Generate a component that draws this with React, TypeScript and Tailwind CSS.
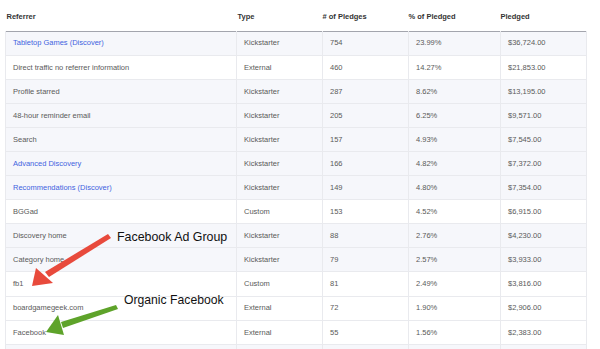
const rows: { ref: string; link?: boolean; type: string; n: string; pct: string; amt: string; shade: boolean }[] = [
  { ref: 'Tabletop Games (Discover)', link: true, type: 'Kickstarter', n: '754', pct: '23.99%', amt: '$36,724.00', shade: true },
  { ref: 'Direct traffic no referrer information', type: 'External', n: '460', pct: '14.27%', amt: '$21,853.00', shade: false },
  { ref: 'Profile starred', type: 'Kickstarter', n: '287', pct: '8.62%', amt: '$13,195.00', shade: true },
  { ref: '48-hour reminder email', type: 'Kickstarter', n: '205', pct: '6.25%', amt: '$9,571.00', shade: true },
  { ref: 'Search', type: 'Kickstarter', n: '157', pct: '4.93%', amt: '$7,545.00', shade: true },
  { ref: 'Advanced Discovery', link: true, type: 'Kickstarter', n: '166', pct: '4.82%', amt: '$7,372.00', shade: true },
  { ref: 'Recommendations (Discover)', link: true, type: 'Kickstarter', n: '149', pct: '4.80%', amt: '$7,354.00', shade: true },
  { ref: 'BGGad', type: 'Custom', n: '153', pct: '4.52%', amt: '$6,915.00', shade: false },
  { ref: 'Discovery home', type: 'Kickstarter', n: '88', pct: '2.76%', amt: '$4,230.00', shade: true },
  { ref: 'Category home', type: 'Kickstarter', n: '79', pct: '2.57%', amt: '$3,933.00', shade: true },
  { ref: 'fb1', type: 'Custom', n: '81', pct: '2.49%', amt: '$3,816.00', shade: false },
  { ref: 'boardgamegeek.com', type: 'External', n: '72', pct: '1.90%', amt: '$2,906.00', shade: false },
  { ref: 'Facebook', type: 'External', n: '55', pct: '1.56%', amt: '$2,383.00', shade: false },
  { ref: '', type: '', n: '', pct: '', amt: '', shade: true },
];

export default function App() {
  return (
    <div className="relative h-[349px] w-[600px] overflow-hidden bg-white font-['Liberation_Sans',Arial,sans-serif] text-[7.5px]">
      <table className="ml-[5px] w-[581px] table-fixed border-collapse">
        <colgroup>
          <col className="w-[231px]" />
          <col className="w-[86px]" />
          <col className="w-[86px]" />
          <col className="w-[92px]" />
          <col className="w-[86px]" />
        </colgroup>
        <thead>
          <tr className="h-[31px] border-b border-[#a3a5ad] text-left font-bold text-[#333]">
            <th className="pl-px pt-[2px]">Referrer</th>
            <th className="pl-px pt-[2px]">Type</th>
            <th className="pl-0 pt-[2px]"># of Pledges</th>
            <th className="pl-0 pt-[2px]">% of Pledged</th>
            <th className="pl-0 pt-[2px]">Pledged</th>
          </tr>
        </thead>
        <tbody>
          {rows.map((r, i) => (
            <tr key={i} className={`h-[24.1px] border-b border-[#e9eaee] text-[#5a5a5a] ${r.shade ? 'bg-[#f6f7fb]' : 'bg-white'}`}>
              <td className={`border-l border-[#e9eaee] pl-[7px] ${r.link ? 'text-[#3f63e0]' : ''}`}>{r.ref}</td>
              <td className="border-l border-[#e9eaee] pl-[7px]">{r.type}</td>
              <td className="border-l border-[#e9eaee] pl-[7px]">{r.n}</td>
              <td className="border-l border-[#e9eaee] pl-[7px]">{r.pct}</td>
              <td className="border-x border-[#e9eaee] pl-[7px]">{r.amt}</td>
            </tr>
          ))}
        </tbody>
      </table>

      <div className="absolute left-[117px] top-[229px] text-[12.4px] leading-[16px] text-[#111]">Facebook Ad Group</div>
      <div className="absolute left-[124px] top-[292px] text-[12.2px] leading-[16px] text-[#111]">Organic Facebook</div>

      <svg className="pointer-events-none absolute left-0 top-0" width="600" height="349" viewBox="0 0 600 349">
        <polygon points="108,234 111,238 49,277 45,272" fill="#e84a3c" />
        <polygon points="32,286 36,268 53,283" fill="#e84a3c" />
        <polygon points="116,305 118,309 63,328 61,322" fill="#5ea32a" />
        <polygon points="46,332 58,315 64,335" fill="#5ea32a" />
      </svg>
    </div>
  );
}
